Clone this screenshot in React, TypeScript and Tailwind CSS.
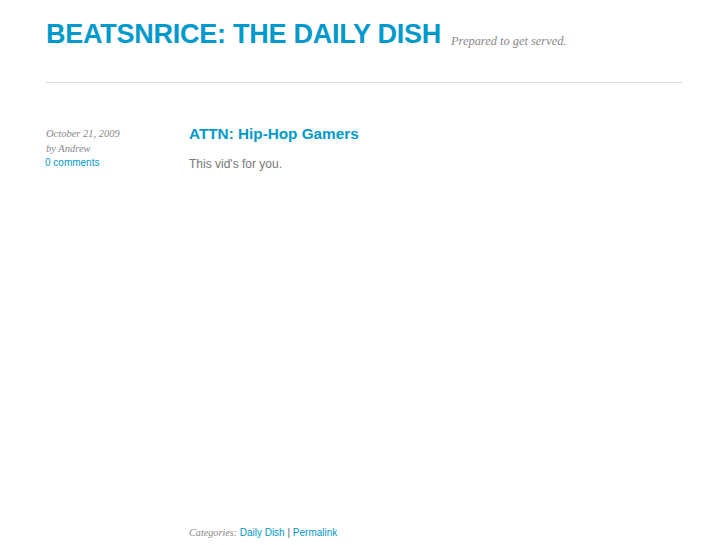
import React from 'react';

const sans = { fontFamily: '"Liberation Sans", Arial, sans-serif' };
const serif = { fontFamily: '"Liberation Serif", "Times New Roman", serif' };

const App: React.FC = () => {
    return (
        <div className="min-h-screen bg-white" style={sans}>
            <div className="ml-[46px] w-[636px]">
                <header className="flex items-baseline gap-[10px] pt-[17px] pb-[31px] border-b border-[#dddddd]">
                    <h1 className="text-[27px] leading-[34px] font-bold text-[#0099cc] tracking-[-0.25px]">
                        BEATSNRICE: THE DAILY DISH
                    </h1>
                    <span className="text-[12.4px] italic text-[#888888] relative top-[2px]" style={serif}>Prepared to get served.</span>
                </header>

                <div className="flex pt-[43px]">
                    <div className="w-[143px] flex-shrink-0 leading-[15px]">
                        <div className="text-[10.5px] italic text-[#888888]" style={serif}>October 21, 2009</div>
                        <div className="text-[10.5px] italic text-[#888888]" style={serif}>by Andrew</div>
                        <a className="block text-[10px] leading-[13px] text-[#0099cc] -ml-[1px]" href="#">0 comments</a>
                    </div>
                    <div className="flex-1">
                        <h2 className="text-[15.3px] leading-[20px] font-bold text-[#0099cc] -mt-[2px]">ATTN: Hip-Hop Gamers</h2>
                        <p className="text-[12px] leading-[16px] text-[#777777] mt-[12px]">This vid's for you.</p>
                        <div className="h-[354px]"></div>
                        <div className="text-[10px] leading-[14px]">
                            <span className="text-[10.2px] italic text-[#888888]" style={serif}>Categories: </span>
                            <a className="text-[#0099cc]" href="#">Daily Dish</a>
                            <span className="text-[#666666]"> | </span>
                            <a className="text-[#0099cc]" href="#">Permalink</a>
                        </div>
                    </div>
                </div>
            </div>
        </div>
    );
};

export default App;
